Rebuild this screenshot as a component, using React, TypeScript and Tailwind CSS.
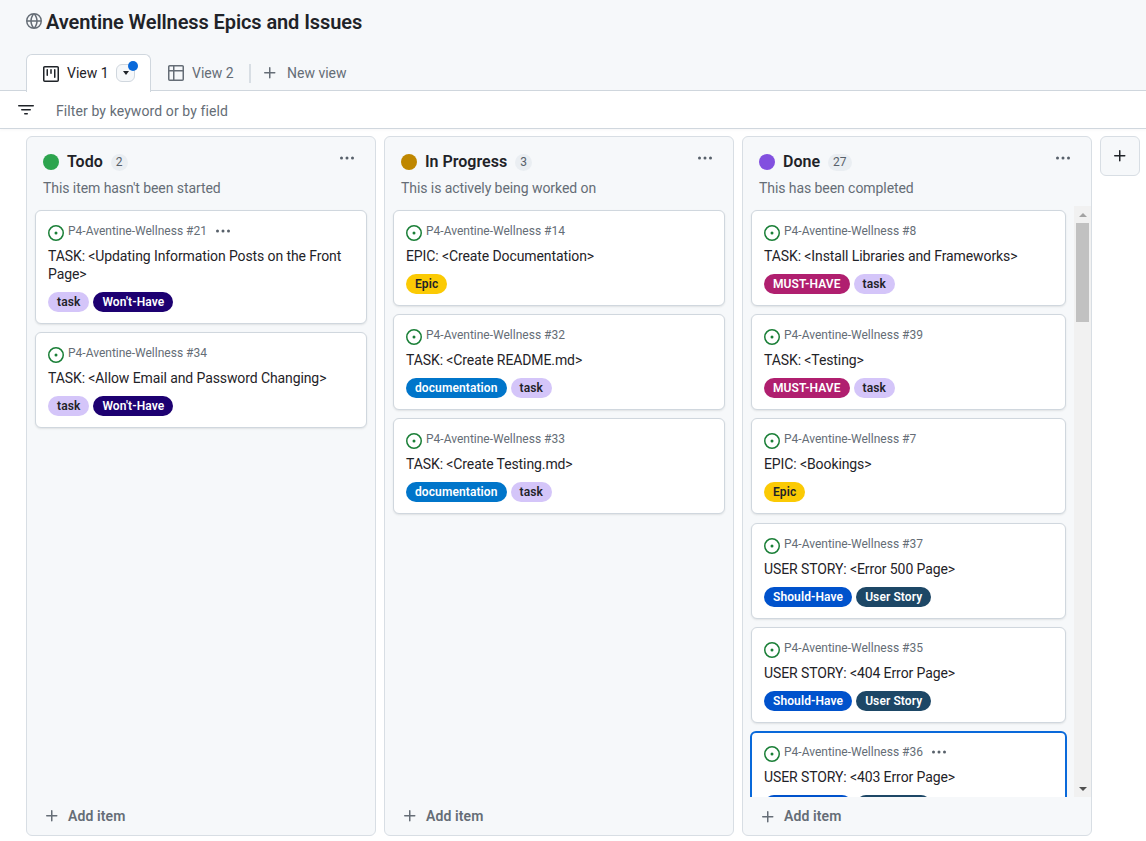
interface Label {
  text: string
  className: string
}

interface Item {
  number: number
  title: string
  labels: Label[]
  menu?: boolean
  selected?: boolean
}

const task: Label = { text: 'task', className: 'bg-[#d4c5f9] text-[#1f2328]' }
const wontHave: Label = { text: "Won't-Have", className: 'bg-[#1d0071] text-white' }
const epic: Label = { text: 'Epic', className: 'bg-[#fbca04] text-[#1f2328]' }
const docs: Label = { text: 'documentation', className: 'bg-[#0075ca] text-white' }
const mustHave: Label = { text: 'MUST-HAVE', className: 'bg-[#b01f6f] text-white' }
const shouldHave: Label = { text: 'Should-Have', className: 'bg-[#0052cc] text-white' }
const userStory: Label = { text: 'User Story', className: 'bg-[#1d4766] text-white' }

const todo: Item[] = [
  { number: 21, title: 'TASK: <Updating Information Posts on the Front Page>', labels: [task, wontHave], menu: true },
  { number: 34, title: 'TASK: <Allow Email and Password Changing>', labels: [task, wontHave] },
]

const inProgress: Item[] = [
  { number: 14, title: 'EPIC: <Create Documentation>', labels: [epic] },
  { number: 32, title: 'TASK: <Create README.md>', labels: [docs, task] },
  { number: 33, title: 'TASK: <Create Testing.md>', labels: [docs, task] },
]

const done: Item[] = [
  { number: 8, title: 'TASK: <Install Libraries and Frameworks>', labels: [mustHave, task] },
  { number: 39, title: 'TASK: <Testing>', labels: [mustHave, task] },
  { number: 7, title: 'EPIC: <Bookings>', labels: [epic] },
  { number: 37, title: 'USER STORY: <Error 500 Page>', labels: [shouldHave, userStory] },
  { number: 35, title: 'USER STORY: <404 Error Page>', labels: [shouldHave, userStory] },
  { number: 36, title: 'USER STORY: <403 Error Page>', labels: [shouldHave, userStory], menu: true, selected: true },
]

function PlusIcon({ className }: { className?: string }) {
  return (
    <svg width="16" height="16" viewBox="0 0 16 16" fill="currentColor" className={`shrink-0 ${className ?? ''}`}>
      <path d="M7.75 2a.75.75 0 0 1 .75.75V7h4.25a.75.75 0 0 1 0 1.5H8.5v4.25a.75.75 0 0 1-1.5 0V8.5H2.75a.75.75 0 0 1 0-1.5H7V2.75A.75.75 0 0 1 7.75 2Z" />
    </svg>
  )
}

function Dots({ className }: { className?: string }) {
  return (
    <svg width="16" height="16" viewBox="0 0 16 16" fill="currentColor" className={`shrink-0 ${className ?? ''}`}>
      <circle cx="2.5" cy="8" r="1.5" />
      <circle cx="8" cy="8" r="1.5" />
      <circle cx="13.5" cy="8" r="1.5" />
    </svg>
  )
}

function IssueIcon() {
  return (
    <svg width="16" height="16" viewBox="0 0 16 16" fill="#1a7f37" className="shrink-0 mt-[4px]">
      <path d="M8 9.5a1.5 1.5 0 1 0 0-3 1.5 1.5 0 0 0 0 3Z" />
      <path d="M8 0a8 8 0 1 1 0 16A8 8 0 0 1 8 0ZM1.5 8a6.5 6.5 0 1 0 13 0 6.5 6.5 0 0 0-13 0Z" />
    </svg>
  )
}

function Card({ item }: { item: Item }) {
  return (
    <div
      className={`shrink-0 bg-white rounded-md px-[12px] pb-[11px] ${
        item.selected
          ? 'border-2 border-[#0969da] -mx-px pt-[10px]'
          : 'border border-[#d0d7de] pt-[11px] shadow-[0_1px_2px_rgba(31,35,40,0.1)]'
      }`}
    >
      <div className="flex items-center h-[18px] gap-[4px] text-[12px] leading-[18px] text-[#656d76]">
        <IssueIcon />
        <span>P4-Aventine-Wellness #{item.number}</span>
        {item.menu && <Dots className="ml-[4px] text-[#57606a]" />}
      </div>
      <div className="mt-[7px] text-[14px] leading-[18px] tracking-[-0.1px] text-[#1f2328]">{item.title}</div>
      <div className="mt-[9px] flex gap-[4px]">
        {item.labels.map((label) => (
          <span
            key={label.text}
            className={`h-[20px] px-[9px] rounded-full text-[12px] leading-[20px] font-semibold tracking-[0.1px] ${label.className}`}
          >
            {label.text}
          </span>
        ))}
      </div>
    </div>
  )
}

function Column({
  name,
  count,
  note,
  dot,
  items,
  scroll,
}: {
  name: string
  count: number
  note: string
  dot: string
  items: Item[]
  scroll?: boolean
}) {
  return (
    <div className="w-[350px] h-[700px] shrink-0 flex flex-col bg-[#f6f8fa] border border-[#d8dee4] rounded-md">
      <div className="h-[69px] shrink-0 pl-[16px] pr-[20px] pt-[14px]">
        <div className="flex items-center h-[22px]">
          <span className={`w-[16px] h-[16px] rounded-full ${dot}`} />
          <span className="ml-[8px] text-[16px] leading-[22px] font-semibold text-[#1f2328]">{name}</span>
          <span className="ml-[8px] px-[5px] h-[17px] rounded-full bg-[#eaeef2] text-[12px] leading-[17px] text-[#57606a]">
            {count}
          </span>
          <Dots className="ml-auto -mt-[8px] text-[#57606a]" />
        </div>
        <div className="mt-[5px] text-[14px] leading-[20px] tracking-[-0.07px] text-[#656d76]">{note}</div>
      </div>
      <div className="flex-1 min-h-0 flex">
        <div className="flex-1 min-w-0 overflow-hidden flex flex-col gap-[8.2px] pt-[4px] px-[8px]">
          {items.map((item) => (
            <Card key={item.number} item={item} />
          ))}
        </div>
        {scroll && (
          <div className="w-[17px] shrink-0 bg-[#f1f1f1] flex flex-col items-center">
            <div className="h-[17px] shrink-0 flex items-center justify-center">
              <span className="border-x-[4px] border-x-transparent border-b-[4px] border-b-[#a3a3a3]" />
            </div>
            <div className="w-[13px] h-[99px] bg-[#c1c1c1]" />
            <div className="mt-auto h-[17px] shrink-0 flex items-center justify-center">
              <span className="border-x-[4px] border-x-transparent border-t-[4px] border-t-[#505050]" />
            </div>
          </div>
        )}
      </div>
      <div className={`h-[38px] shrink-0 flex items-center pl-[17px] text-[14px] font-semibold tracking-[0.1px] text-[#656d76] ${scroll ? 'pt-[1px]' : ''}`}>
        <PlusIcon className="mr-[8px]" />
        Add item
      </div>
    </div>
  )
}

export default function App() {
  return (
    <div className="w-[1146px] h-[841px] overflow-hidden bg-white font-['Roboto','Noto_Sans',sans-serif]">
      <header className="h-[91px] bg-[#f6f8fa] border-b border-[#d0d7de] pl-[26px]">
        <div className="flex items-center pt-[5px] h-[38px]">
          <svg width="16" height="16" viewBox="0 0 16 16" fill="#656d76" className="-mt-[2px]">
            <path d="M8 0a8 8 0 1 1 0 16A8 8 0 0 1 8 0ZM5.78 8.75a9.64 9.64 0 0 0 1.363 4.177c.255.426.542.832.857 1.215.245-.296.551-.705.857-1.215A9.64 9.64 0 0 0 10.22 8.75Zm4.44-1.5a9.64 9.64 0 0 0-1.363-4.177c-.307-.51-.612-.919-.857-1.215a9.927 9.927 0 0 0-.857 1.215A9.64 9.64 0 0 0 5.78 7.25Zm-5.944 1.5H1.543a6.507 6.507 0 0 0 4.666 5.5c-.123-.181-.24-.365-.352-.552-.715-1.192-1.437-2.874-1.581-4.948Zm-2.733-1.5h2.733c.144-2.074.866-3.756 1.58-4.948.12-.197.237-.381.353-.552a6.507 6.507 0 0 0-4.666 5.5Zm10.181 1.5c-.144 2.074-.866 3.756-1.58 4.948-.12.197-.237.381-.353.552a6.507 6.507 0 0 0 4.666-5.5Zm2.733-1.5a6.507 6.507 0 0 0-4.666-5.5c.123.181.24.365.353.552.714 1.192 1.436 2.874 1.58 4.948Z" />
          </svg>
          <h1 className="ml-[4px] text-[20px] leading-[28px] font-semibold tracking-[-0.1px] text-[#1f2328]">Aventine Wellness Epics and Issues</h1>
        </div>
        <nav className="flex items-center h-[38px] mt-[16px] text-[14px] text-[#656d76]">
          <div className="h-[38px] w-[125px] shrink-0 bg-white border border-b-0 border-[#d0d7de] rounded-t-md flex items-center pl-[16px] text-[#1f2328] relative z-10">
            <svg width="16" height="16" viewBox="0 0 16 16" fill="#1f2328" className="shrink-0">
              <path d="M0 1.75C0 .784.784 0 1.75 0h12.5C15.216 0 16 .784 16 1.75v12.5A1.75 1.75 0 0 1 14.25 16H1.75A1.75 1.75 0 0 1 0 14.25ZM1.5 1.75v12.5c0 .138.112.25.25.25h12.5a.25.25 0 0 0 .25-.25V1.75a.25.25 0 0 0-.25-.25H1.75a.25.25 0 0 0-.25.25ZM11.75 3a.75.75 0 0 1 .75.75v7.5a.75.75 0 0 1-1.5 0v-7.5a.75.75 0 0 1 .75-.75Zm-8.25.75a.75.75 0 0 1 1.5 0v5.5a.75.75 0 0 1-1.5 0ZM8 3a.75.75 0 0 1 .75.75v3.5a.75.75 0 0 1-1.5 0v-3.5A.75.75 0 0 1 8 3Z" />
            </svg>
            <span className="ml-[8px]">View 1</span>
            <span className="absolute left-[89px] top-[9px] w-[19px] h-[18px] rounded-md border border-[#d0d7de] bg-[#f6f8fa] flex items-center justify-center">
              <span className="border-x-[3.5px] border-x-transparent border-t-[4px] border-t-[#1f2328]" />
              <span className="absolute -top-[4px] -right-[4px] w-[10px] h-[10px] rounded-full bg-[#0969da]" />
            </span>
          </div>
          <div className="flex items-center ml-[17px] w-[81px] shrink-0">
            <svg width="16" height="16" viewBox="0 0 16 16" fill="#656d76" className="shrink-0">
              <path d="M0 1.75C0 .784.784 0 1.75 0h12.5C15.216 0 16 .784 16 1.75v12.5A1.75 1.75 0 0 1 14.25 16H1.75A1.75 1.75 0 0 1 0 14.25ZM6.5 6.5v8h7.75a.25.25 0 0 0 .25-.25V6.5Zm8-1.5V1.75a.25.25 0 0 0-.25-.25H6.5V5Zm-13 1.5v7.75c0 .138.112.25.25.25H5v-8ZM5 5V1.5H1.75a.25.25 0 0 0-.25.25V5Z" />
            </svg>
            <span className="ml-[8px]">View 2</span>
          </div>
          <span className="w-[2px] h-[19px] bg-[#d8dee4]" />
          <PlusIcon className="ml-[11px] text-[#656d76]" />
          <span className="ml-[9px]">New view</span>
        </nav>
      </header>

      <div className="h-[38px] flex items-center border-b border-[#d0d7de] pl-[18px] pt-[3px] shadow-[0_1px_3px_rgba(31,35,40,0.04)]">
        <svg width="16" height="16" viewBox="0 0 16 16" fill="#1f2328" className="-mt-[2px]">
          <path d="M.75 3h14.5a.75.75 0 0 1 0 1.5H.75a.75.75 0 0 1 0-1.5ZM3 7.75A.75.75 0 0 1 3.75 7h8.5a.75.75 0 0 1 0 1.5h-8.5A.75.75 0 0 1 3 7.75Zm3 4a.75.75 0 0 1 .75-.75h2.5a.75.75 0 0 1 0 1.5h-2.5a.75.75 0 0 1-.75-.75Z" />
        </svg>
        <span className="ml-[22px] text-[14px] tracking-[0.1px] text-[#656d76]">Filter by keyword or by field</span>
      </div>

      <main className="flex gap-[8px] pl-[26px] pt-[7px]">
        <Column name="Todo" count={2} note="This item hasn't been started" dot="bg-[#2da44e]" items={todo} />
        <Column name="In Progress" count={3} note="This is actively being worked on" dot="bg-[#bf8700]" items={inProgress} />
        <Column name="Done" count={27} note="This has been completed" dot="bg-[#8250df]" items={done} scroll />
        <button className="w-[40px] h-[40px] shrink-0 rounded-md border border-[#d8dee4] bg-[#f6f8fa] flex items-center justify-center text-[#1f2328]">
          <PlusIcon />
        </button>
      </main>
    </div>
  )
}
